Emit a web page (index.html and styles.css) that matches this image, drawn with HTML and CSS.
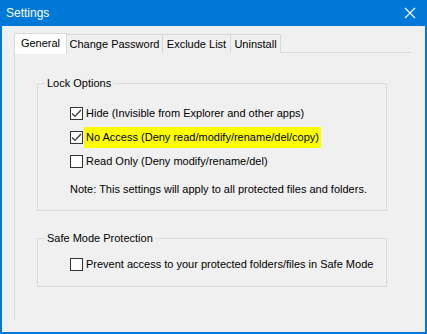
FILE: index.html
```html
<!DOCTYPE html>
<html>
<head>
<meta charset="utf-8">
<link rel="stylesheet" href="styles.css">
</head>
<body>
<div class="window">
  <div class="titlebar">
    <span class="title">Settings</span>
    <svg class="close" width="12" height="12" viewBox="0 0 12 12"><path d="M1 1 L11 11 M11 1 L1 11" stroke="#fff" stroke-width="1.2" fill="none"/></svg>
  </div>
  <div class="body">
    <div class="tabs">
      <div class="tab tab-general selected">General</div>
      <div class="tab tab-password">Change Password</div>
      <div class="tab tab-exclude">Exclude List</div>
      <div class="tab tab-uninstall">Uninstall</div>
    </div>
    <div class="pane">
      <fieldset class="group group-lock">
        <legend>Lock Options</legend>
        <div class="row">
          <span class="box checked"><svg width="11" height="11" viewBox="0 0 11 11"><path d="M1 5.5 L4 8.5 L10 2" stroke="#333" stroke-width="1.2" fill="none"/></svg></span>
          <span class="label">Hide (Invisible from Explorer and other apps)</span>
        </div>
        <div class="row">
          <span class="box checked"><svg width="11" height="11" viewBox="0 0 11 11"><path d="M1 5.5 L4 8.5 L10 2" stroke="#333" stroke-width="1.2" fill="none"/></svg></span>
          <span class="label highlight">No Access (Deny read/modify/rename/del/copy)</span>
        </div>
        <div class="row">
          <span class="box"></span>
          <span class="label">Read Only (Deny modify/rename/del)</span>
        </div>
        <div class="note">Note: This settings will apply to all protected files and folders.</div>
      </fieldset>
      <fieldset class="group group-safe">
        <legend>Safe Mode Protection</legend>
        <div class="row">
          <span class="box"></span>
          <span class="label">Prevent access to your protected folders/files in Safe Mode</span>
        </div>
      </fieldset>
    </div>
  </div>
</div>
</body>
</html>
```
FILE: styles.css
```css
* { box-sizing: border-box; }
html, body { margin: 0; padding: 0; }
body {
  font-family: "Liberation Sans", Arial, sans-serif;
  font-size: 11px;
  color: #000;
  background: #fff;
}
.window {
  width: 427px;
  height: 334px;
  background: #f0f0f0;
  border: 2px solid #0078d7;
  border-top: 0;
  display: flex;
  flex-direction: column;
}
.titlebar {
  height: 26px;
  margin: 0 -2px;
  background: #0078d7;
  display: flex;
  align-items: center;
  justify-content: space-between;
  padding: 0 11px 0 6px;
}
.title {
  color: #fff;
  font-size: 12px;
}
.close { display: block; }
.body {
  flex: 1;
  display: flex;
  flex-direction: column;
  padding: 7px 14px 12px 12px;
}
.tabs {
  display: flex;
  align-items: flex-end;
  height: 20px;
  position: relative;
  z-index: 1;
  margin-bottom: -1px;
}
.tab {
  height: 19px;
  line-height: 18px;
  border: 1px solid #d9d9d9;
  border-bottom: 0;
  background: #f0f0f0;
  text-align: center;
  margin-left: -1px;
}
.tab.selected {
  height: 21px;
  line-height: 18px;
  background: #fff;
  margin-left: 0;
  margin-bottom: -1px;
  position: relative;
  z-index: 2;
}
.tab-general { width: 53px; }
.tab-password { width: 97px; }
.tab-exclude { width: 69px; }
.tab-uninstall { width: 51px; }
.pane {
  flex: 1;
  border-top: 1px solid #d9d9d9;
  border-left: 1px solid #d9d9d9;
  padding: 0 0 0 22px;
  display: flex;
  flex-direction: column;
}
.group {
  width: 350px;
  margin: 0;
  border: 1px solid #dcdcdc;
  padding: 0 0 0 32px;
}
.group legend {
  margin-left: -25px;
  padding: 0 2px;
  line-height: 14px;
}
.group-lock {
  margin-top: 23px;
  padding-top: 11px;
  padding-bottom: 9px;
}
.group-safe {
  margin-top: 20px;
  padding-top: 7px;
  padding-bottom: 10px;
}
.row {
  height: 24px;
  display: flex;
  align-items: center;
}
.box {
  width: 13px;
  height: 13px;
  border: 1px solid #333;
  background: #fff;
  display: flex;
  align-items: center;
  justify-content: center;
  flex-shrink: 0;
}
.box svg { display: block; }
.label {
  margin-left: 1px;
  padding: 0 2px;
  line-height: 21px;
  white-space: nowrap;
}
.highlight { background: #ffff00; }
.note {
  margin-top: 4px;
  height: 24px;
  line-height: 24px;
  white-space: nowrap;
}
```
